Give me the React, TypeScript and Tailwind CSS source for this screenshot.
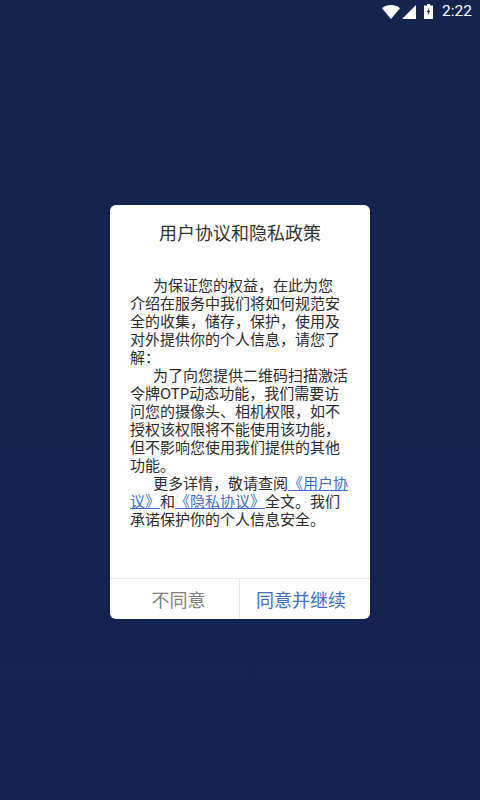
const cjk = "font-['Noto_Sans_CJK_SC','Noto_Sans',sans-serif]";

// Android status bar glyphs, drawn rather than taken from a package
function StatusBar() {
  return (
    <div className="flex h-6 items-center justify-end pr-2 text-white">
      <svg width="18" height="14" viewBox="0 0 18 14" className="mr-[2px] mb-[1px]">
        <path d="M0 3.200C2.400 1.200 5.500 0 9 0s6.600 1.200 9 3.200L9 14z" fill="#fff" />
      </svg>
      <svg width="14" height="14" viewBox="0 0 14 14" className="mr-2 mb-[1px]">
        <path d="M14 0v14H0z" fill="#fff" />
      </svg>
      <svg width="9" height="15" viewBox="0 0 9 15" className="mr-[9px] mb-[2px]">
        <path d="M3 0h3v1.500h3V15H0V1.500h3z" fill="#fff" />
        <path d="M5.200 3.500 2.800 8.300h1.500l-.6 3.400 2.500-4.900H4.700z" fill="#14254f" />
      </svg>
      <span className="font-['Roboto',sans-serif] text-[15.500px] leading-none">2:22</span>
    </div>
  );
}

export default function App() {
  return (
    <div className={`flex h-[800px] w-[480px] flex-col bg-gradient-to-b from-[#13244e] to-[#142353] ${cjk}`}>
      <StatusBar />
      <div className="mt-[181px] flex h-[414px] w-[260px] flex-col self-center overflow-hidden rounded-md bg-white">
        <h1 className="pt-[15px] text-center text-[18px] leading-[24px] font-normal text-[#333]">用户协议和隐私政策</h1>
        <div className="flex-1 px-5 pt-[32px] text-[15px] leading-[18px] text-[#2b2b2b]">
          <p className="indent-[23px]">为保证您的权益，在此为您<br />介绍在服务中我们将如何规范安全的收集，储存，保护，使用及对外提供你的个人信息，请您了解：</p>
          <p className="indent-[23px]">为了向您提供二维码扫描激活令牌OTP动态功能，我们需要访问您的摄像头、相机权限，如不授权该权限将不能使用该功能，但不影响您使用我们提供的其他功能。</p>
          <p className="indent-[23px]">
            更多详情，敬请查阅
            <a className="text-[#3d70c4] underline">《用户协议》</a>
            和
            <a className="text-[#3d70c4] underline">《隐私协议》</a>
            全文。我们承诺保护你的个人信息安全。
          </p>
        </div>
        <div className="flex h-[41px] border-t border-[#e6e6e6] text-[18px]">
          <button type="button" className="w-[129px] pl-2 text-[#808080]">不同意</button>
          <button type="button" className="flex-1 border-l border-[#e6e6e6] pr-2 text-[#3d70c4]">同意并继续</button>
        </div>
      </div>
    </div>
  );
}
